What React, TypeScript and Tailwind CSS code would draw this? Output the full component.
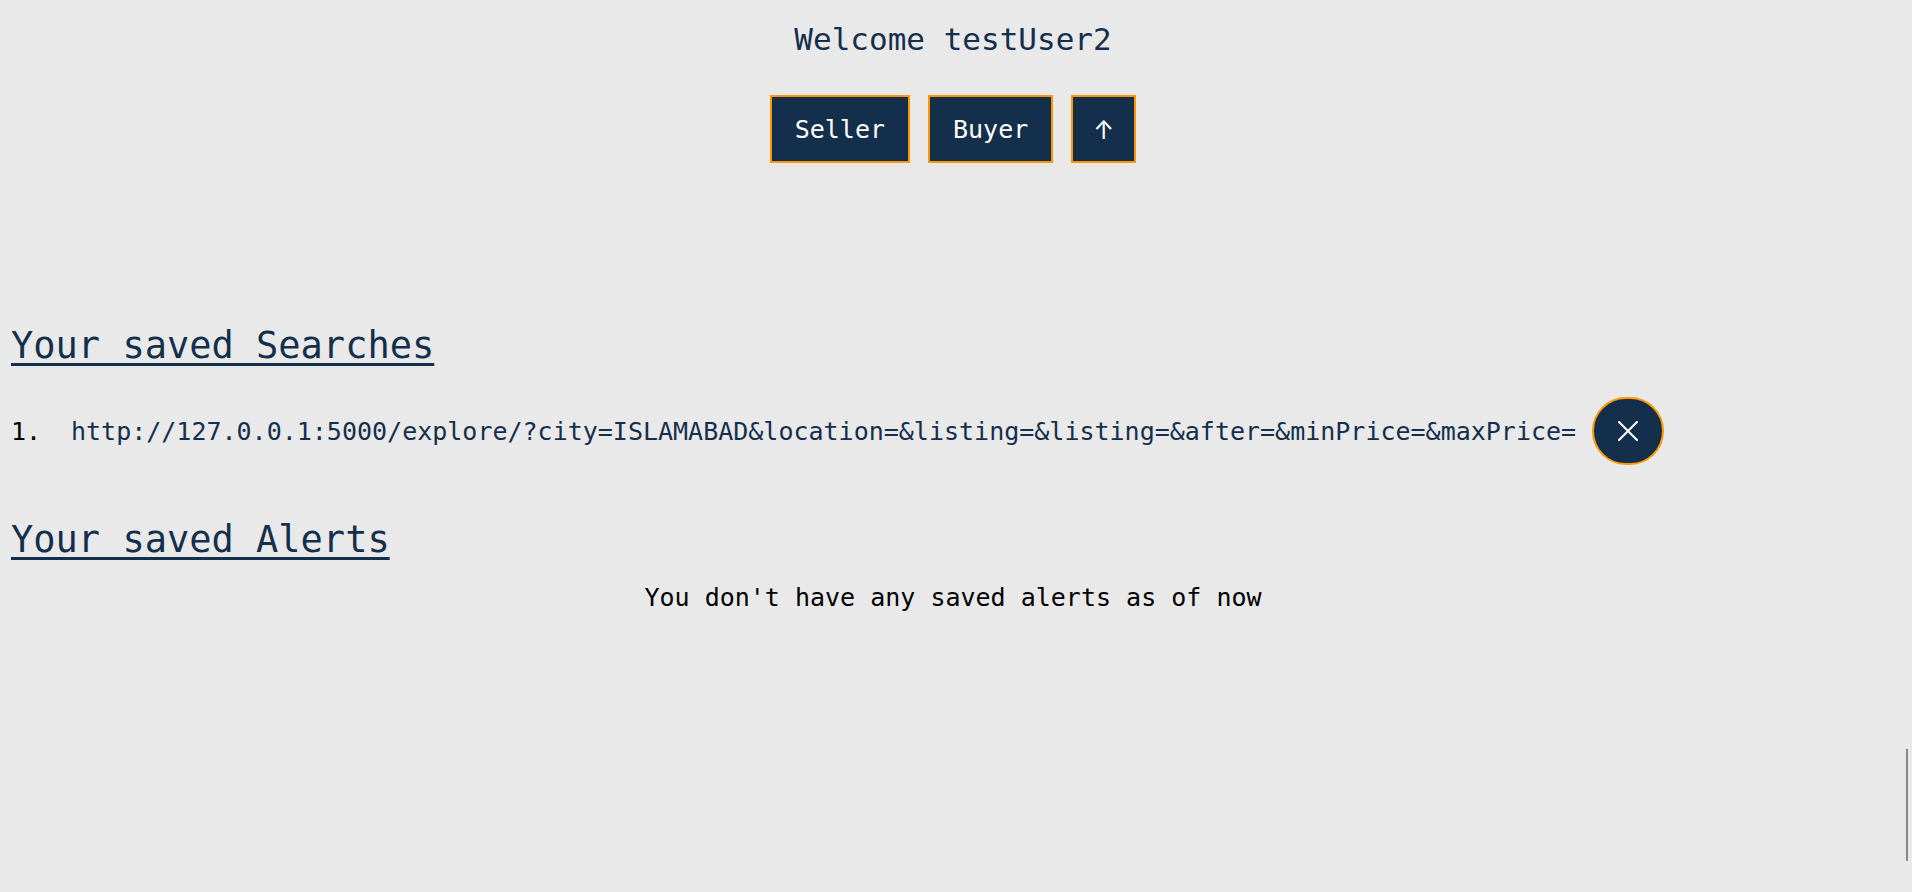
const nav = ["Seller", "Buyer"];

const searches = [
  "http://127.0.0.1:5000/explore/?city=ISLAMABAD&location=&listing=&listing=&after=&minPrice=&maxPrice=",
];

const navButtonClass =
  "h-[68px] border-2 border-[#ff9800] bg-[#142f4c] px-[23px] pt-0.5 text-white";

const headingClass =
  "text-[37px] leading-[52px] text-[#142f4c] underline decoration-[3px] underline-offset-[5px]";

export default function App() {
  return (
    <main className="min-h-screen bg-[#e9e9e9] pt-[18px] pr-[17px] pl-[11px] font-['DejaVu_Sans_Mono',monospace] text-[25px] leading-[34px] text-black">
      <h1 className="text-center text-[31px] leading-[42px] text-[#142f4c]">Welcome testUser2</h1>
      <nav className="mt-[35px] flex justify-center gap-[18px]">
        {nav.map((label) => (
          <button key={label} className={navButtonClass}>
            {label}
          </button>
        ))}
        <button className={navButtonClass}>
          <span className="flex w-[15px] justify-center font-['Inter',sans-serif]">↑</span>
        </button>
      </nav>
      <section className="mt-[157px]">
        <h2 className={headingClass}>Your saved Searches</h2>
        <ol className="mt-[25px]">
          {searches.map((url, i) => (
            <li key={url} className="flex items-center">
              <span className="w-[60px] shrink-0 pt-0.5">{i + 1}.</span>
              <a href={url} className="pt-0.5 text-[#142f4c]">{url}</a>
              <button aria-label="Delete search" className="ml-4 flex h-[68px] w-[72px] shrink-0 items-center justify-center rounded-full border-2 border-[#ff9800] bg-[#142f4c]">
                <svg width="20" height="20" viewBox="0 0 20 20" stroke="#fff" strokeWidth="2" strokeLinecap="round"><path d="M1 1 19 19M19 1 1 19" /></svg>
              </button>
            </li>
          ))}
        </ol>
      </section>
      <section className="mt-[49px]">
        <h2 className={headingClass}>Your saved Alerts</h2>
        <p className="mt-[15px] text-center">You don't have any saved alerts as of now</p>
      </section>
      <div aria-hidden="true" className="fixed right-1 bottom-[31px] h-28 w-0.5 bg-[#888]" />
    </main>
  );
}
